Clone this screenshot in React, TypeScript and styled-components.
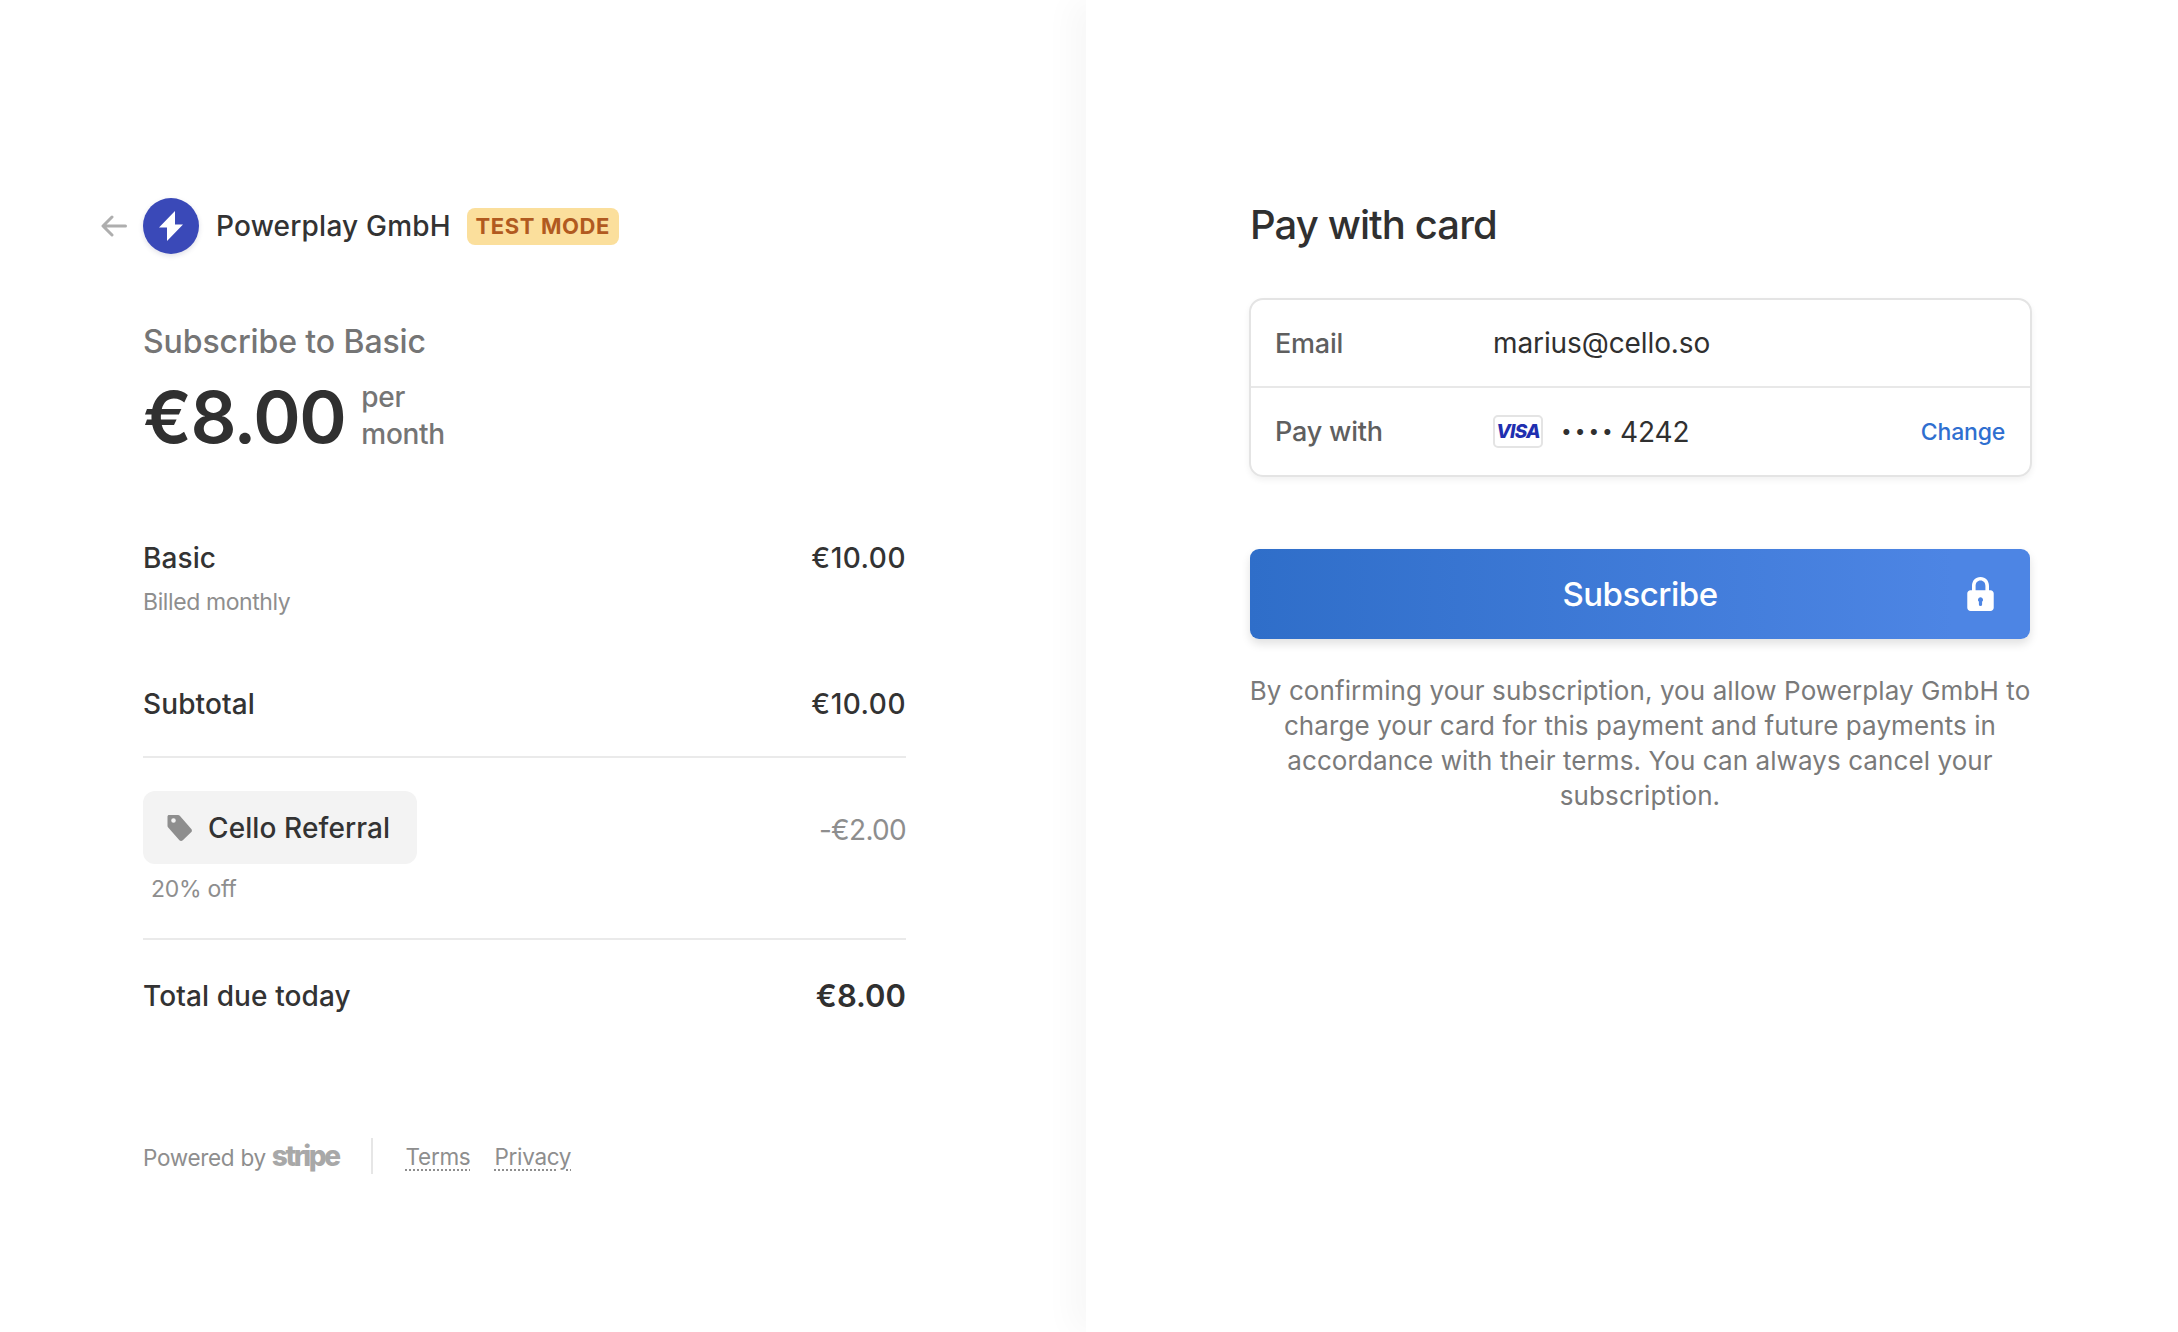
import { FC } from 'react'
import styled, { createGlobalStyle } from 'styled-components'

const GlobalStyle = createGlobalStyle`
  html, body {
    margin: 0;
    padding: 0;
    background: #fff;
    font-family: Inter, "Liberation Sans", sans-serif;
    color: #303030;
  }
  * {
    box-sizing: border-box;
  }
`

const App: FC = () => (
  <Page>
    <GlobalStyle />
    <Summary>
      <Header>
        <BackIcon viewBox="0 0 26 22" fill="none">
          <path
            d="M24.5 11H2.5M11 2 2 11l9 9"
            stroke="#aeaeae"
            strokeWidth="3"
            strokeLinecap="round"
            strokeLinejoin="round"
          />
        </BackIcon>
        <Logo>
          <svg width="24" height="30" viewBox="0 0 24 30">
            <path d="M16 0 0 16.500h8V30l16-16.500h-8z" fill="#fff" />
          </svg>
        </Logo>
        <Merchant>Powerplay GmbH</Merchant>
        <TestBadge>TEST MODE</TestBadge>
      </Header>

      <Body>
        <ProductTitle>Subscribe to Basic</ProductTitle>
        <PriceRow>
          <Price>€8.00</Price>
          <Period>
            per
            <br />
            month
          </Period>
        </PriceRow>

        <BasicRow>
          <div>
            <LineName>Basic</LineName>
            <LineNote>Billed monthly</LineNote>
          </div>
          <LineAmount>€10.00</LineAmount>
        </BasicRow>

        <SubtotalRow>
          <LineName>Subtotal</LineName>
          <LineAmount>€10.00</LineAmount>
        </SubtotalRow>

        <DiscountRow>
          <div>
            <PromoChip>
              <svg width="26" height="28" viewBox="0 0 26 28">
                <path
                  d="M2 1h9c.8 0 1.500.3 2 .9l11.300 13c.9 1 .8 2.500-.2 3.400l-8.300 8c-1 .9-2.500.9-3.400-.1L1.200 13.500C.7 13 .5 12.400.5 11.700V2.500C.5 1.700 1.200 1 2 1zm4.500 3.200a2.300 2.300 0 1 0 0 4.600 2.300 2.300 0 0 0 0-4.600z"
                  fill="#8e8e8e"
                  fillRule="evenodd"
                />
              </svg>
              Cello Referral
            </PromoChip>
            <PromoNote>20% off</PromoNote>
          </div>
          <DiscountAmount>-€2.00</DiscountAmount>
        </DiscountRow>

        <TotalRow>
          <LineName>Total due today</LineName>
          <TotalAmount>€8.00</TotalAmount>
        </TotalRow>

        <Footer>
          <PoweredBy>
            Powered by <StripeMark>stripe</StripeMark>
          </PoweredBy>
          <FooterDivider />
          <FooterLink>Terms</FooterLink>
          <FooterLink>Privacy</FooterLink>
        </Footer>
      </Body>
    </Summary>

    <Payment>
      <PayTitle>Pay with card</PayTitle>
      <DetailsCard>
        <DetailRow>
          <DetailLabel>Email</DetailLabel>
          <DetailValue>marius@cello.so</DetailValue>
        </DetailRow>
        <DetailRow>
          <DetailLabel>Pay with</DetailLabel>
          <VisaBadge>VISA</VisaBadge>
          <CardDots>••••</CardDots>
          <DetailValue>4242</DetailValue>
          <ChangeLink>Change</ChangeLink>
        </DetailRow>
      </DetailsCard>
      <SubscribeButton>
        Subscribe
        <LockIcon viewBox="0 0 28 36">
          <path
            d="M14 0C8.500 0 5 4 5 9.500V14H3.500C1.500 14 0 15.500 0 17.500v15C0 34.500 1.500 36 3.500 36h21c2 0 3.500-1.500 3.500-3.500v-15c0-2-1.500-3.500-3.500-3.500H23V9.500C23 4 19.500 0 14 0zM8.800 14V9.500C8.800 6 10.800 3.600 14 3.600s5.200 2.400 5.200 5.900V14H8.800zM14 21.500a2.700 2.700 0 0 1 1.700 4.800V29a1.700 1.700 0 0 1-3.400 0v-2.700a2.700 2.700 0 0 1 1.700-4.800z"
            fill="#fff"
            fillRule="evenodd"
          />
        </LockIcon>
      </SubscribeButton>
      <Terms>
        By confirming your subscription, you allow Powerplay GmbH to charge your
        card for this payment and future payments in accordance with their
        terms. You can always cancel your subscription.
      </Terms>
    </Payment>
  </Page>
)

export default App

const Page = styled.div`
  display: flex;
  width: 2178px;
  height: 1332px;
  overflow: hidden;
  background: #fff;
`

const Summary = styled.section`
  width: 1086px;
  flex-shrink: 0;
  padding: 197px 0 0 101px;
`

const Header = styled.header`
  display: flex;
  align-items: center;
  height: 58px;
`

const BackIcon = styled.svg`
  width: 26px;
  height: 22px;
  margin-right: 16px;
`

const Logo = styled.div`
  width: 56px;
  height: 56px;
  border-radius: 50%;
  background: #3a49b8;
  box-shadow: 0 2px 5px rgba(50, 50, 93, 0.15);
  display: flex;
  align-items: center;
  justify-content: center;
  margin-right: 17px;
`

const Merchant = styled.span`
  font-size: 28px;
  font-weight: 500;
  letter-spacing: 0.2px;
  color: #333;
  margin-right: 16px;
`

const TestBadge = styled.span`
  height: 37px;
  width: 152px;
  display: flex;
  align-items: center;
  justify-content: center;
  border-radius: 8px;
  background: #fbdf9c;
  color: #b15a1f;
  font-size: 22px;
  font-weight: 700;
  letter-spacing: 0.6px;
`

const Body = styled.div`
  width: 763px;
  margin-left: 42px;
`

const ProductTitle = styled.div`
  margin-top: 66px;
  height: 42px;
  line-height: 42px;
  font-size: 32px;
  font-weight: 500;
  letter-spacing: -0.1px;
  color: #757575;
`

const PriceRow = styled.div`
  display: flex;
  align-items: center;
  margin-top: 16px;
  height: 74px;
`

const Price = styled.div`
  font-size: 72px;
  font-weight: 600;
  letter-spacing: -1.4px;
  color: #303030;
  margin-right: 16px;
`

const Period = styled.div`
  font-size: 28px;
  font-weight: 500;
  line-height: 37px;
  letter-spacing: -0.3px;
  color: #757575;
`

const Row = styled.div`
  display: flex;
  justify-content: space-between;
  align-items: flex-start;
`

const BasicRow = styled(Row)`
  margin-top: 86px;
`

const SubtotalRow = styled(Row)`
  margin-top: 68px;
  height: 73px;
  border-bottom: 2px solid #eaeaea;
`

const DiscountRow = styled(Row)`
  padding-top: 33px;
  height: 182px;
  border-bottom: 2px solid #eaeaea;
`

const TotalRow = styled(Row)`
  padding-top: 37px;
  height: 80px;
`

const LineName = styled.div`
  font-size: 28px;
  line-height: 38px;
  font-weight: 500;
  letter-spacing: 0.1px;
  color: #333;
`

const LineNote = styled.div`
  margin-top: 10px;
  font-size: 23px;
  line-height: 30px;
  letter-spacing: -0.4px;
  color: #8e8e8e;
`

const LineAmount = styled.div`
  font-size: 28px;
  line-height: 38px;
  font-weight: 500;
  letter-spacing: 0.5px;
  color: #333;
`

const PromoChip = styled.div`
  display: flex;
  align-items: center;
  gap: 15px;
  width: 274px;
  height: 73px;
  padding-left: 24px;
  border-radius: 12px;
  background: #f3f3f3;
  font-size: 28px;
  font-weight: 500;
  letter-spacing: 0.1px;
  color: #333;
  white-space: nowrap;
`

const PromoNote = styled.div`
  margin: 10px 0 0 8px;
  font-size: 23px;
  line-height: 30px;
  letter-spacing: -0.3px;
  color: #8e8e8e;
`

const DiscountAmount = styled.div`
  margin-top: 20px;
  font-size: 28px;
  line-height: 38px;
  letter-spacing: -0.7px;
  color: #8e8e8e;
`

const TotalAmount = styled.div`
  font-size: 31px;
  line-height: 38px;
  font-weight: 600;
  letter-spacing: 0;
  color: #303030;
`

const Footer = styled.footer`
  display: flex;
  align-items: center;
  margin-top: 118px;
  height: 36px;
  font-size: 22.500px;
  letter-spacing: -0.3px;
  color: #8e8e8e;
`

const PoweredBy = styled.span`
  white-space: nowrap;
`

const StripeMark = styled.span`
  font-size: 28px;
  line-height: 1;
  font-weight: 800;
  letter-spacing: -2.400px;
  color: #a8a8a8;
`

const FooterDivider = styled.span`
  width: 2px;
  height: 36px;
  background: #e6e6e6;
  margin: 0 33px 0 32px;
`

const FooterLink = styled.span`
  margin-right: 24px;
  text-decoration: underline dotted;
  text-underline-offset: 5px;
  text-decoration-thickness: 2px;
`

const Payment = styled.section`
  position: relative;
  flex: 1;
  padding: 197px 148px 0 164px;
  background: #fff;
  box-shadow: -15px 0 30px 0 rgba(0, 0, 0, 0.03);
`

const PayTitle = styled.h1`
  margin: 0;
  height: 56px;
  line-height: 56px;
  font-size: 40px;
  font-weight: 500;
  letter-spacing: -0.9px;
  color: #303030;
`

const DetailsCard = styled.div`
  margin: 45px -2px 0 -1px;
  border: 2px solid #e4e4e4;
  border-radius: 14px;
  box-shadow: 0 3px 6px rgba(0, 0, 0, 0.06);
`

const DetailRow = styled.div`
  display: flex;
  align-items: center;
  height: 86px;
  padding: 0 25px 0 24px;
  & + & {
    height: 89px;
    border-top: 2px solid #e8e8e8;
  }
`

const DetailLabel = styled.span`
  width: 218px;
  flex-shrink: 0;
  font-size: 27px;
  font-weight: 500;
  letter-spacing: -0.2px;
  color: #5f5f5f;
`

const DetailValue = styled.span`
  font-size: 28px;
  letter-spacing: -0.1px;
  color: #303030;
`

const VisaBadge = styled.span`
  width: 50px;
  height: 33px;
  display: flex;
  align-items: center;
  justify-content: center;
  margin-right: 18px;
  border: 2px solid #e4e4e4;
  border-radius: 5px;
  font-size: 19px;
  font-style: italic;
  font-weight: 800;
  letter-spacing: -0.8px;
  color: #1f2fb0;
`

const CardDots = styled.span`
  width: 59px;
  font-size: 19px;
  letter-spacing: 3px;
  color: #303030;
`

const ChangeLink = styled.span`
  margin-left: auto;
  font-size: 23px;
  font-weight: 500;
  letter-spacing: -0.2px;
  color: #2f6fd0;
`

const SubscribeButton = styled.div`
  position: relative;
  display: flex;
  align-items: center;
  justify-content: center;
  height: 90px;
  margin-top: 72px;
  border-radius: 9px;
  background: linear-gradient(90deg, #2f6ec9 0%, #4d85e4 90%);
  box-shadow: 0 5px 10px rgba(0, 0, 0, 0.12);
  color: #fff;
  font-size: 33px;
  font-weight: 500;
  letter-spacing: -0.5px;
`

const LockIcon = styled.svg`
  position: absolute;
  right: 36px;
  top: 28px;
  width: 27px;
  height: 34px;
`

const Terms = styled.p`
  margin: 34px -6px 0;
  font-size: 26px;
  line-height: 35px;
  letter-spacing: 0.09px;
  text-align: center;
  color: #7a7a7a;
`
